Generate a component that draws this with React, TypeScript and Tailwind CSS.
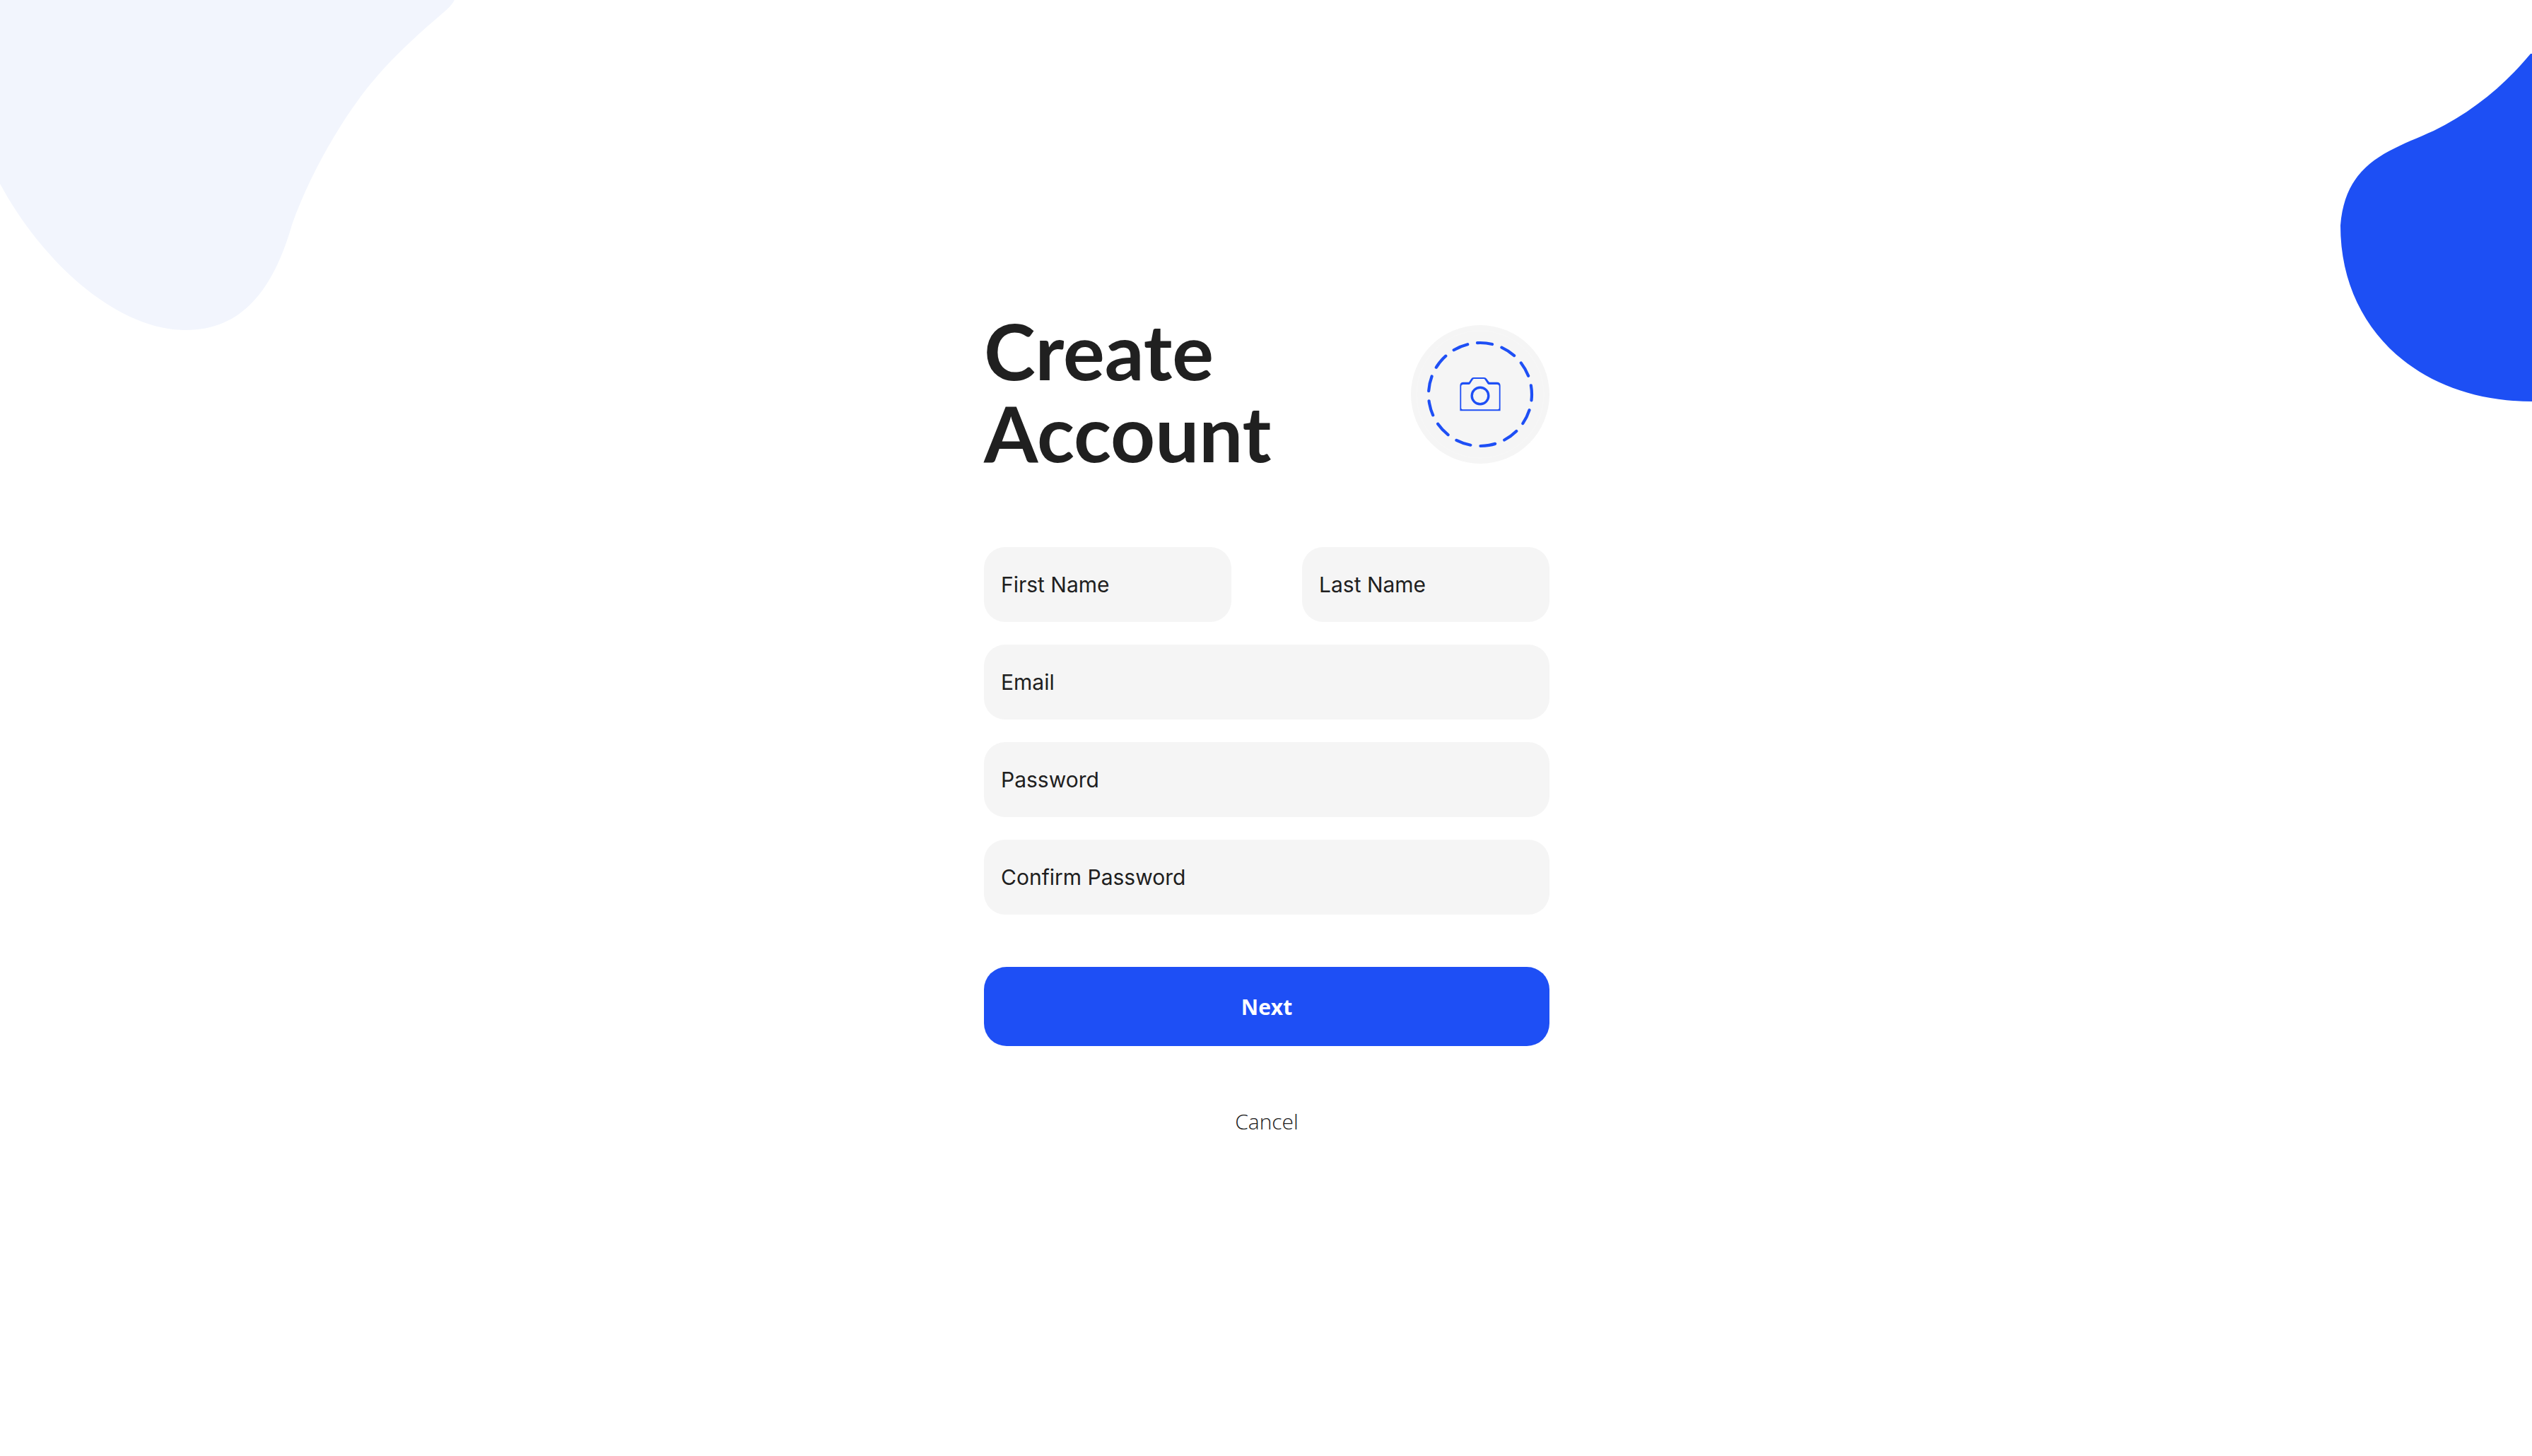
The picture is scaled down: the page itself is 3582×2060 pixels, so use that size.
function PaleBlob() {
  return (
    <svg
      aria-hidden="true"
      viewBox="0 0 644 468"
      className="pointer-events-none absolute left-0 top-0 w-[644px] max-w-[40%]"
    >
      <path
        fill="#f2f5fd"
        d="M0 0H643C640 6 633 13 627 18C600 41 560 76 530 112C488 160 438 246 413 318C386 412 341 467 263 467C165 467 60 371 0 260Z"
      />
    </svg>
  );
}

function BlueBlob() {
  return (
    <svg
      aria-hidden="true"
      viewBox="0 0 271 492"
      className="pointer-events-none absolute right-0 top-19 w-[271px] max-w-[20%]"
    >
      <path
        fill="#1d4ff4"
        d="M271 0H269C232 45 185 83 132 109C70 137 7 153 0 243C0 390 112 492 271 492Z"
      />
    </svg>
  );
}

function PhotoPicker() {
  return (
    <button type="button" aria-label="Upload photo" className="size-49 shrink-0 cursor-pointer rounded-full bg-[#f5f5f5]">
      <svg aria-hidden="true" viewBox="0 0 196 196" fill="none" className="size-full">
        <circle cx="98" cy="98" r="90" stroke="#f8f8f8" strokeWidth="1" />
        <circle
          cx="98"
          cy="98"
          r="73"
          pathLength="455"
          stroke="#1e4ff5"
          strokeWidth="4.2"
          strokeLinecap="round"
          strokeDasharray="21 14"
          transform="rotate(-10 98 98)"
        />
        <path
          fill="#1e4ff5"
          fillRule="evenodd"
          d="M88.6 74.1H103.4Q106 74.1 107.2 76L110.8 80.8H121.8Q126.6 80.8 126.6 85.6V121.2H69.4V85.6Q69.4 80.8 74.2 80.8H81.2Q82 80.8 82.4 80.2L85.2 76Q86.2 74.1 88.6 74.1ZM89.2 75.9Q88.4 75.9 87.9 76.7L83.6 83.2Q83.1 84 82.1 84H74.2Q71.2 84 71.2 86.8V117.2Q71.2 119.2 73.1 119.2H122.9Q124.8 119.2 124.8 117.2V86.8Q124.8 84 121.8 84H110.2Q109.2 84 108.7 83.2L104.4 76.7Q103.9 75.9 103.1 75.9Z"
        />
        <circle cx="98" cy="100" r="11.8" stroke="#1e4ff5" strokeWidth="3.4" />
      </svg>
    </button>
  );
}

type FieldProps = {
  name: string;
  label: string;
  type?: string;
  autoComplete?: string;
};

function Field({ name, label, type = "text", autoComplete }: FieldProps) {
  return (
    <input
      name={name}
      type={type}
      aria-label={label}
      autoComplete={autoComplete}
      placeholder={label}
      className="block h-[106px] w-full min-w-0 rounded-[30px] bg-[#f5f5f5] px-6 font-['Inter',sans-serif] text-[30px] text-[#202020] outline-none placeholder:text-[#202020] placeholder:opacity-100"
    />
  );
}

export default function App() {
  return (
    <main className="relative flex min-h-screen items-center justify-center overflow-hidden bg-white pl-0.5 font-['Open_Sans',sans-serif] text-[#202020]">
      <PaleBlob />
      <BlueBlob />
      <form className="relative w-full max-w-[800px]" onSubmit={(e) => e.preventDefault()}>
        <header className="flex h-58 items-center justify-between">
          <h1 className="pb-2.5 font-['Lato',sans-serif] text-[110px] font-bold leading-[116px]">
            Create
            <br />
            Account
          </h1>
          <PhotoPicker />
        </header>

        <div className="mt-25 flex flex-col gap-8">
          <div className="flex gap-25">
            <Field name="firstName" label="First Name" autoComplete="given-name" />
            <Field name="lastName" label="Last Name" autoComplete="family-name" />
          </div>
          <Field name="email" label="Email" type="email" autoComplete="email" />
          <Field name="password" label="Password" type="password" autoComplete="new-password" />
          <Field name="confirmPassword" label="Confirm Password" type="password" autoComplete="new-password" />
        </div>

        <button
          type="submit"
          className="mt-[74px] block h-28 w-full cursor-pointer rounded-[32px] bg-[#1e4ff5] text-[30px] font-bold text-white"
        >
          Next
        </button>
        <button type="button" className="mx-auto mt-[74px] block h-16 cursor-pointer text-[30px] font-light">
          Cancel
        </button>
      </form>
    </main>
  );
}
